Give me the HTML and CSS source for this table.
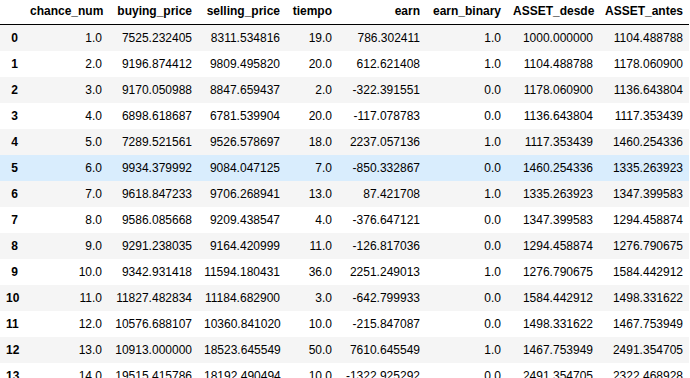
FILE: index.html
```html
<!DOCTYPE html>
<html>
<head>
<meta charset="utf-8">
<link rel="stylesheet" href="styles.css">
</head>
<body>
<table class="df">
<thead>
<tr><th class="c-idx"></th><th class="c-num">chance_num</th><th class="c-buy">buying_price</th><th class="c-sell">selling_price</th><th class="c-tiempo">tiempo</th><th class="c-earn">earn</th><th class="c-bin">earn_binary</th><th class="c-desde">ASSET_desde</th><th class="c-antes">ASSET_antes</th></tr>
</thead>
<tbody>
<tr><th>0</th><td>1.0</td><td>7525.232405</td><td>8311.534816</td><td>19.0</td><td>786.302411</td><td>1.0</td><td>1000.000000</td><td>1104.488788</td></tr>
<tr><th>1</th><td>2.0</td><td>9196.874412</td><td>9809.495820</td><td>20.0</td><td>612.621408</td><td>1.0</td><td>1104.488788</td><td>1178.060900</td></tr>
<tr><th>2</th><td>3.0</td><td>9170.050988</td><td>8847.659437</td><td>2.0</td><td>-322.391551</td><td>0.0</td><td>1178.060900</td><td>1136.643804</td></tr>
<tr><th>3</th><td>4.0</td><td>6898.618687</td><td>6781.539904</td><td>20.0</td><td>-117.078783</td><td>0.0</td><td>1136.643804</td><td>1117.353439</td></tr>
<tr><th>4</th><td>5.0</td><td>7289.521561</td><td>9526.578697</td><td>18.0</td><td>2237.057136</td><td>1.0</td><td>1117.353439</td><td>1460.254336</td></tr>
<tr class="hover"><th>5</th><td>6.0</td><td>9934.379992</td><td>9084.047125</td><td>7.0</td><td>-850.332867</td><td>0.0</td><td>1460.254336</td><td>1335.263923</td></tr>
<tr><th>6</th><td>7.0</td><td>9618.847233</td><td>9706.268941</td><td>13.0</td><td>87.421708</td><td>1.0</td><td>1335.263923</td><td>1347.399583</td></tr>
<tr><th>7</th><td>8.0</td><td>9586.085668</td><td>9209.438547</td><td>4.0</td><td>-376.647121</td><td>0.0</td><td>1347.399583</td><td>1294.458874</td></tr>
<tr><th>8</th><td>9.0</td><td>9291.238035</td><td>9164.420999</td><td>11.0</td><td>-126.817036</td><td>0.0</td><td>1294.458874</td><td>1276.790675</td></tr>
<tr><th>9</th><td>10.0</td><td>9342.931418</td><td>11594.180431</td><td>36.0</td><td>2251.249013</td><td>1.0</td><td>1276.790675</td><td>1584.442912</td></tr>
<tr><th>10</th><td>11.0</td><td>11827.482834</td><td>11184.682900</td><td>3.0</td><td>-642.799933</td><td>0.0</td><td>1584.442912</td><td>1498.331622</td></tr>
<tr><th>11</th><td>12.0</td><td>10576.688107</td><td>10360.841020</td><td>10.0</td><td>-215.847087</td><td>0.0</td><td>1498.331622</td><td>1467.753949</td></tr>
<tr><th>12</th><td>13.0</td><td>10913.000000</td><td>18523.645549</td><td>50.0</td><td>7610.645549</td><td>1.0</td><td>1467.753949</td><td>2491.354705</td></tr>
<tr><th>13</th><td>14.0</td><td>19515.415786</td><td>18192.490494</td><td>10.0</td><td>-1322.925292</td><td>0.0</td><td>2491.354705</td><td>2322.468928</td></tr>
</tbody>
</table>
</body>
</html>
```
FILE: styles.css
```css
html, body {
  margin: 0;
  padding: 0;
  background: #fff;
  overflow: hidden;
}
.df {
  margin-top: -2px;
  width: 689px;
  table-layout: fixed;
  border: none;
  border-collapse: collapse;
  border-spacing: 0;
  color: #000;
  font-family: "Liberation Sans", Arial, sans-serif;
  font-size: 12px;
}
.df th, .df td {
  box-sizing: border-box;
  text-align: right;
  vertical-align: middle;
  padding: 6px;
  line-height: 14px;
  white-space: nowrap;
  overflow: visible;
  border: none;
}
.df th {
  font-weight: bold;
}
.df thead {
  border-bottom: 1px solid #000;
}
.c-idx { width: 24px; }
.c-num { width: 84px; }
.c-buy { width: 90px; }
.c-sell { width: 88px; }
.c-tiempo { width: 52px; }
.c-earn { width: 88px; }
.c-bin { width: 81px; }
.c-desde { width: 92px; }
.c-antes { width: 90px; }
.df tbody tr:nth-child(odd) {
  background: #f5f5f5;
}
.df tbody tr.hover {
  background: #d9edfd;
}
```
